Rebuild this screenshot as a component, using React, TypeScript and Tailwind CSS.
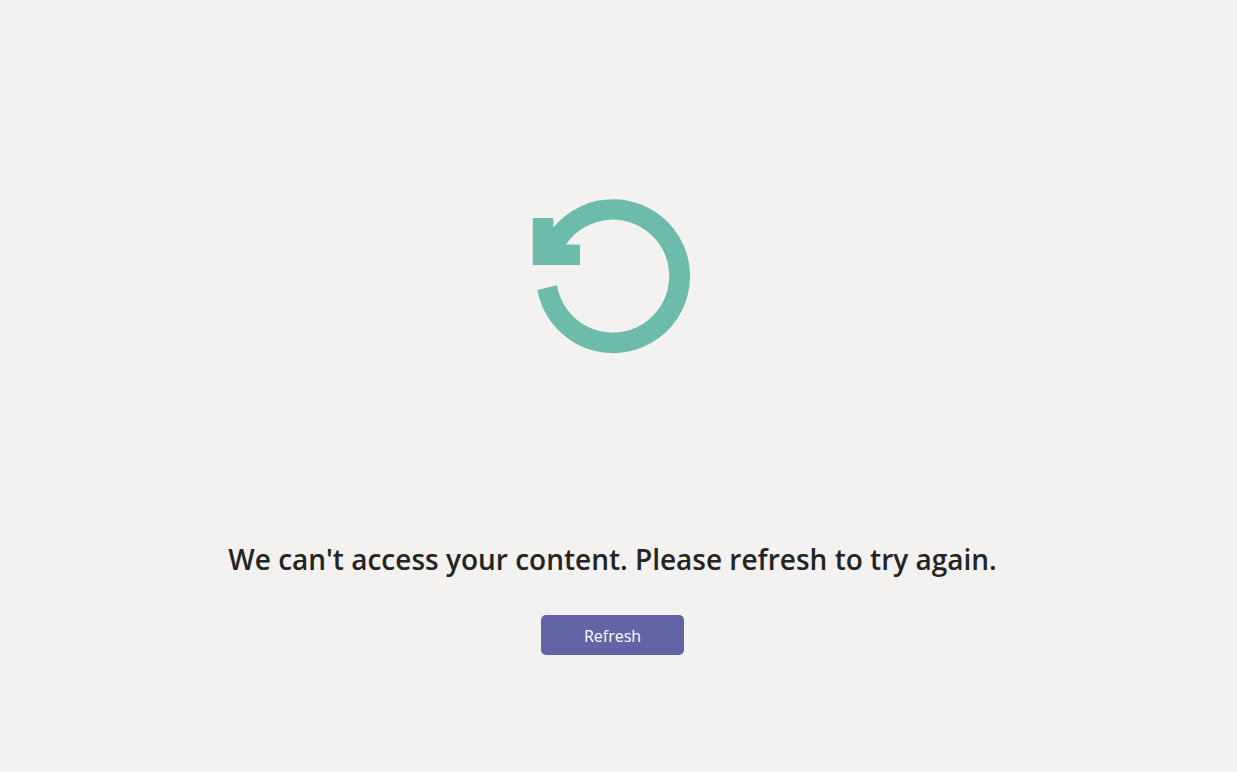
import React from 'react';

const RefreshIllustration: React.FC = () => (
  <svg width="161" height="156" viewBox="0 0 161 156" fill="#6dbbab" aria-hidden="true">
    <path d="M5.3 91.9A77 77 0 1 0 21.3 29.6V20H0.8V67H48V46.4H34A56.5 56.5 0 1 1 25 87.2Z" />
  </svg>
);

export default function App() {
  return (
    <main className="flex min-h-screen flex-col items-center bg-[#f3f2f1] pt-[198px] pr-3 pb-8 font-['Open_Sans','Noto_Sans',sans-serif]">
      <RefreshIllustration />
      <h1 className="mt-[185px] text-center text-[28px] leading-10 font-semibold text-[#252423]">
        We can't access your content. Please refresh to try again.
      </h1>
      <button
        type="button"
        className="mt-9 h-10 w-[143px] rounded-[5px] bg-[#6264a7] pt-0.5 text-base text-white"
        onClick={() => window.location.reload()}
      >
        Refresh
      </button>
    </main>
  );
}
